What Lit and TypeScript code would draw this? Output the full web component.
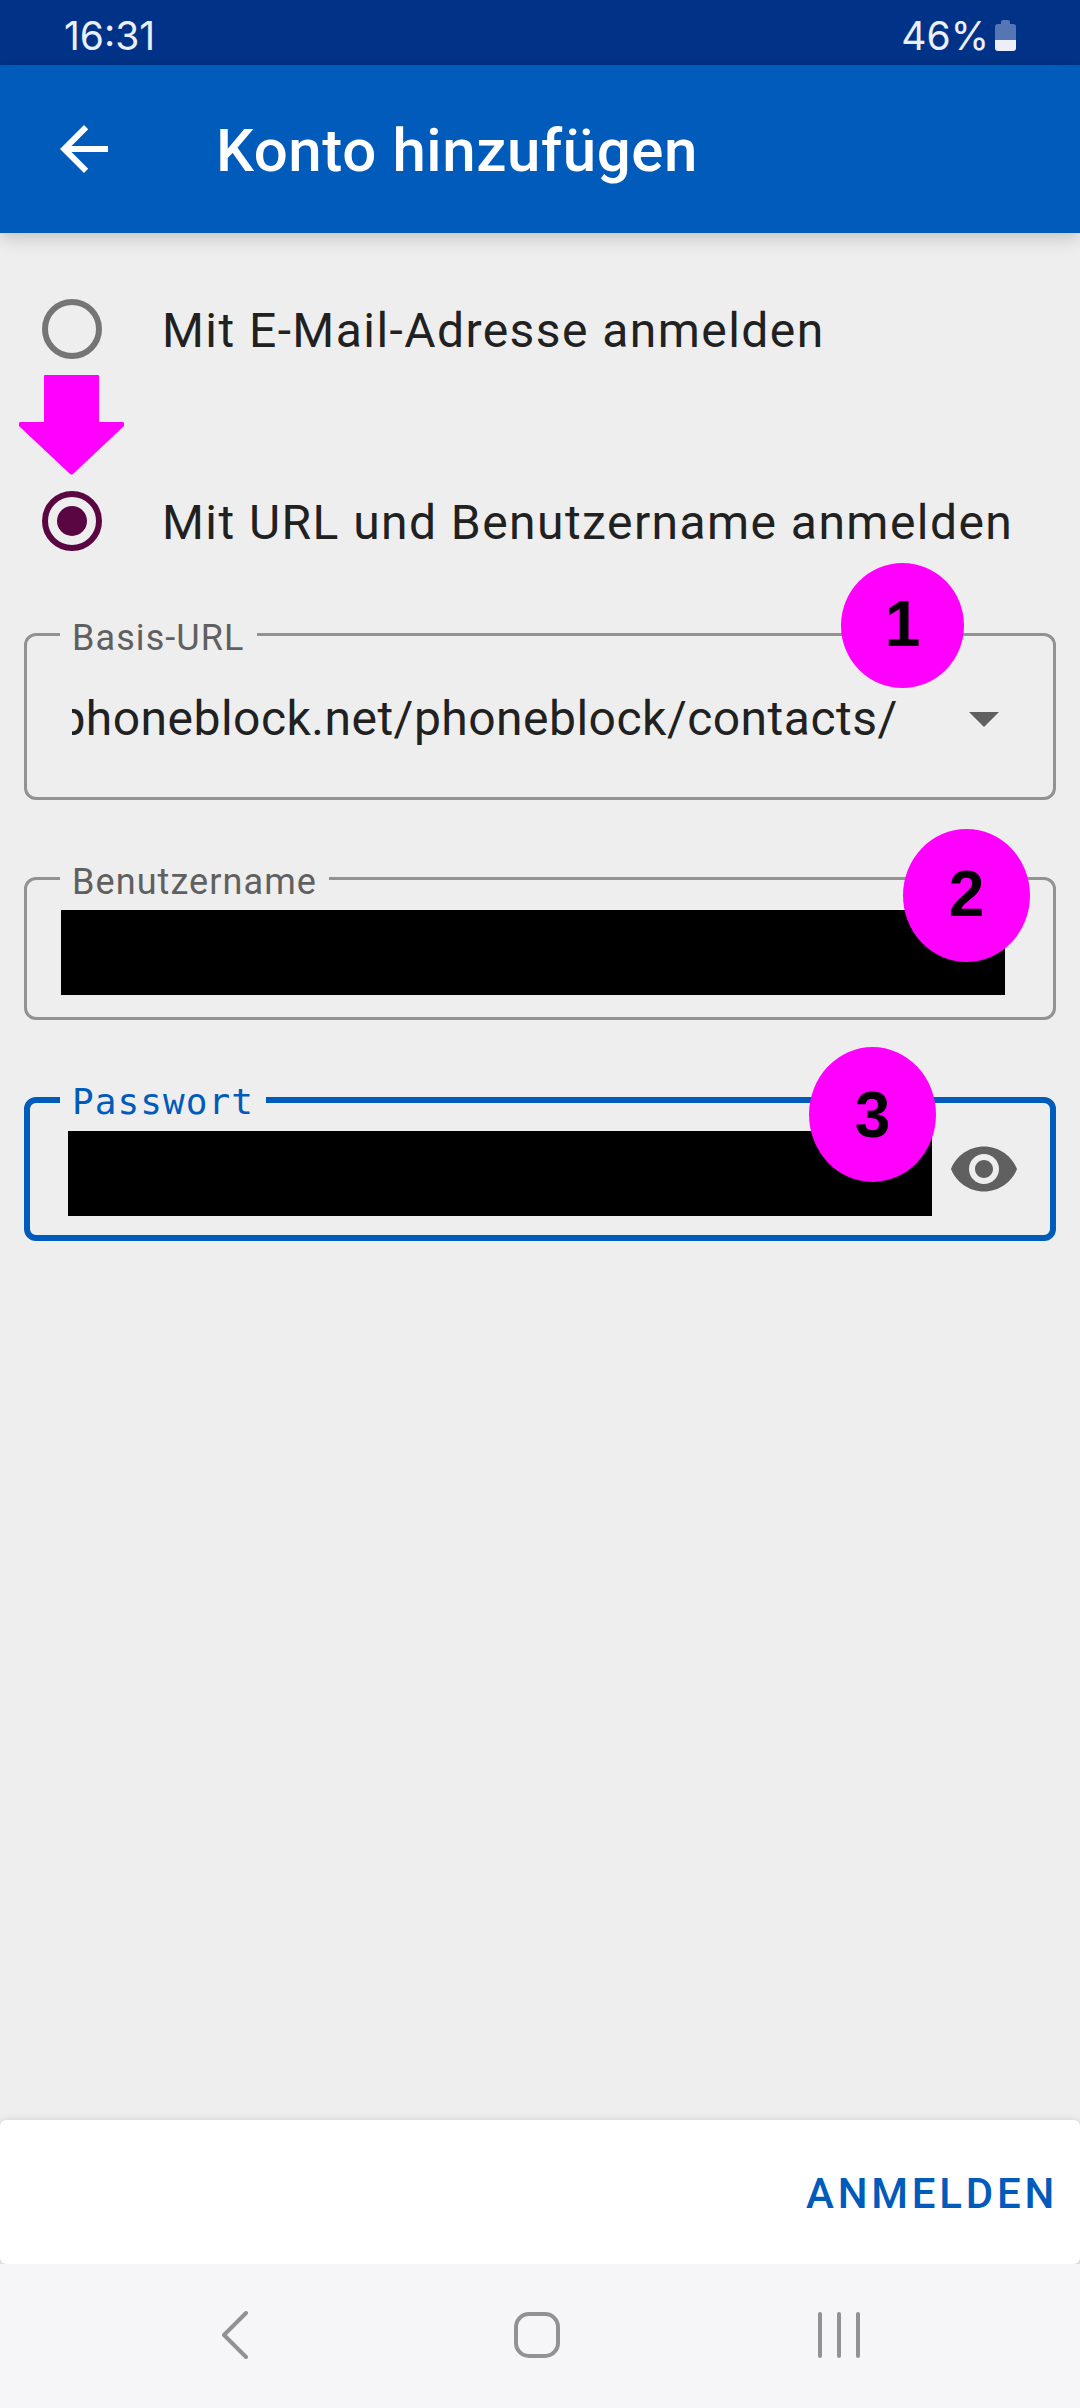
import { LitElement, html, css, svg } from "lit";
import { customElement, state, query } from "lit/decorators.js";

const backArrow = svg`<path d="M20 11H7.83l5.59-5.59L12 4l-8 8 8 8 1.41-1.41L7.83 13H20v-2z" />`;
const eye = svg`<path d="M12 4.5C7 4.5 2.73 7.61 1 12c1.73 4.39 6 7.5 11 7.5s9.27-3.11 11-7.5c-1.73-4.39-6-7.5-11-7.5zM12 17c-2.76 0-5-2.24-5-5s2.24-5 5-5 5 2.24 5 5-2.24 5-5 5zm0-8c-1.66 0-3 1.34-3 3s1.34 3 3 3 3-1.34 3-3-1.34-3-3-3z" />`;
const caret = svg`<path d="M7 10l5 5 5-5z" />`;

@customElement("app-root")
export class AppRoot extends LitElement {
  static styles = css`
    :host {
      display: flex;
      flex-direction: column;
      min-height: 100vh;
      background: #eeeeee;
      color: #212121;
      font-family: Roboto, "Liberation Sans", sans-serif;
      overflow: hidden;
    }
    * {
      box-sizing: border-box;
    }
    button {
      display: flex;
      align-items: center;
      justify-content: center;
      margin: 0;
      padding: 0;
      border: 0;
      background: none;
      color: inherit;
      font: inherit;
    }
    svg {
      display: block;
      fill: currentColor;
    }
    .status {
      display: flex;
      align-items: center;
      justify-content: space-between;
      height: 65px;
      padding: 6px 64px 0 64px;
      background: #003388;
      color: #eceff8;
      font-family: Inter, Roboto, sans-serif;
      font-size: 39px;
      line-height: 48px;
    }
    .battery {
      display: flex;
      align-items: center;
      gap: 6px;
    }
    .bar {
      display: flex;
      align-items: center;
      gap: 96px;
      height: 168px;
      padding: 0 48px;
      background: #005bbb;
      color: #ffffff;
      box-shadow: 0 4px 18px rgba(0, 0, 0, 0.2);
    }
    .title {
      margin: 0;
      padding-top: 4px;
      font-size: 60px;
      line-height: 72px;
      font-weight: 500;
      letter-spacing: 0.01em;
    }
    .form {
      flex: 1;
      display: flex;
      flex-direction: column;
      gap: 18px;
      padding: 24px;
    }
    .choices {
      display: flex;
      flex-direction: column;
      gap: 48px;
    }
    .choice {
      position: relative;
      display: flex;
      align-items: center;
      gap: 60px;
      height: 144px;
      padding: 0 18px;
      font-size: 48px;
      line-height: 56px;
      letter-spacing: 0.03em;
      white-space: nowrap;
    }
    .caption {
      padding-top: 4px;
    }
    .radio {
      appearance: none;
      display: grid;
      place-items: center;
      flex: none;
      width: 60px;
      height: 60px;
      margin: 0;
      border: 6px solid #757575;
      border-radius: 50%;
      outline: none;
    }
    .radio:checked {
      border-color: #590642;
    }
    .radio:checked::before {
      content: "";
      width: 30px;
      height: 30px;
      border-radius: 50%;
      background: #590642;
    }
    .pointer {
      position: absolute;
      left: -5px;
      bottom: 118px;
      color: #ff00ff;
    }
    .fields {
      display: flex;
      flex-direction: column;
      gap: 55px;
    }
    .field {
      position: relative;
    }
    .outline {
      min-width: 0;
      margin: 0;
      padding: 0 33px;
      border: 3px solid #929292;
      border-radius: 12px;
    }
    .legend {
      padding: 8px 12px 0;
      color: #606060;
      font-size: 36px;
      line-height: 39px;
      letter-spacing: 0.03em;
    }
    .focused {
      padding: 0 30px;
      border: 6px solid #005bbb;
    }
    .focused .legend {
      padding: 6px 12px 2px;
      color: #005bbb;
      font-family: "DejaVu Sans Mono", monospace;
      line-height: 42px;
    }
    .row {
      display: flex;
      align-items: center;
    }
    .row-url {
      height: 139px;
      padding: 0 0 20px 12px;
      gap: 50px;
    }
    .row-user {
      padding: 8px 15px 22px 1px;
    }
    .row-pass {
      align-items: flex-start;
      gap: 16px;
      padding: 6px 0 19px 8px;
    }
    .text {
      flex: 1;
      min-width: 0;
      height: 64px;
      margin: 0;
      padding: 2px 0 0;
      border: 0;
      border-radius: 0;
      outline: none;
      background: none;
      color: inherit;
      font: inherit;
      font-size: 48px;
      letter-spacing: 0.01em;
    }
    .covered {
      height: 85px;
      background: #000000;
      color: #000000;
    }
    .icon {
      flex: none;
      width: 72px;
      height: 76px;
      color: #606060;
    }
    .badge {
      position: absolute;
      display: flex;
      align-items: center;
      justify-content: center;
      width: 127px;
      height: 133px;
      padding-bottom: 4px;
      border-radius: 50%;
      background: #ff00ff;
      color: #000000;
      font-family: "Liberation Sans", Arial, sans-serif;
      font-size: 64px;
      font-weight: 700;
      line-height: 72px;
    }
    .badge-1 {
      top: -48px;
      right: 92px;
      width: 123px;
      height: 125px;
    }
    .badge-2 {
      top: -26px;
      right: 26px;
    }
    .badge-3 {
      top: -28px;
      right: 120px;
      height: 135px;
      padding-bottom: 0;
    }
    .actions {
      display: flex;
      align-items: center;
      justify-content: flex-end;
      height: 144px;
      padding: 0 22px;
      border-radius: 6px;
      background: #ffffff;
      box-shadow: 0 2px 10px rgba(0, 0, 0, 0.2);
    }
    .submit {
      height: 108px;
      padding-top: 4px;
      color: #005bbb;
      font-size: 42px;
      font-weight: 500;
      line-height: 48px;
      letter-spacing: 0.09em;
    }
    .nav {
      position: relative;
      display: grid;
      grid-template-columns: repeat(3, 1fr);
      height: 144px;
      padding: 0 90px 2px 84px;
      background: #f6f6f8;
      color: #929292;
    }
    .stroke {
      fill: none;
      stroke: currentColor;
      stroke-width: 4;
      stroke-linecap: round;
      stroke-linejoin: round;
    }
  `;

  @state() private mode = "url";
  @state() private revealed = false;
  @query("#base-url") private baseUrl!: HTMLInputElement;

  // Long addresses show their end, the part that differs between servers.
  protected firstUpdated() {
    this.baseUrl.scrollLeft = this.baseUrl.scrollWidth;
  }

  render() {
    return html`
      <div class="status">
        <span>16:31</span>
        <span class="battery">
          <span>46%</span>
          <svg width="21" height="32" viewBox="0 0 21 32" aria-hidden="true">
            <path fill="#5576b2" d="M6 2q0-2 2-2h5q2 0 2 2v2h3q3 0 3 3v13H0V7q0-3 3-3h3z" />
            <path d="M0 20h21v8q0 3-3 3H3q-3 0-3-3z" />
          </svg>
        </span>
      </div>
      <header class="bar">
        <button type="button" aria-label="Zurück">
          <svg width="72" height="72" viewBox="0 0 24 24">${backArrow}</svg>
        </button>
        <h1 class="title">Konto hinzufügen</h1>
      </header>
      <main class="form">
        <div class="choices" role="radiogroup">
          <label class="choice">
            <input class="radio" type="radio" name="mode" value="mail"
              .checked=${this.mode === "mail"} @change=${() => (this.mode = "mail")} />
            <span class="caption">Mit E-Mail-Adresse anmelden</span>
          </label>
          <label class="choice">
            <input class="radio" type="radio" name="mode" value="url"
              .checked=${this.mode === "url"} @change=${() => (this.mode = "url")} />
            <span class="caption">Mit URL und Benutzername anmelden</span>
            <svg class="pointer" width="105" height="100" viewBox="0 0 105 100" aria-hidden="true">
              <path d="M26 0h53q1 0 1 1v46h24q1 0 1 2v2L54 99q-1.500 1-3 0L0 51v-2q0-2 1-2h24V1q0-1 1-1z" />
            </svg>
          </label>
        </div>
        <div class="fields">
          <div class="field">
            <fieldset class="outline">
              <legend class="legend"><label for="base-url">Basis-URL</label></legend>
              <div class="row row-url">
                <input class="text" id="base-url" type="text"
                  value="https://phoneblock.net/phoneblock/contacts/" />
                <button class="icon" type="button" aria-label="Auswahl öffnen">
                  <svg width="72" height="72" viewBox="0 0 24 24">${caret}</svg>
                </button>
              </div>
            </fieldset>
            <span class="badge badge-1">1</span>
          </div>
          <div class="field">
            <fieldset class="outline">
              <legend class="legend"><label for="user">Benutzername</label></legend>
              <div class="row row-user">
                <input class="text covered" id="user" type="text" />
              </div>
            </fieldset>
            <span class="badge badge-2">2</span>
          </div>
          <div class="field">
            <fieldset class="outline focused">
              <legend class="legend"><label for="password">Passwort</label></legend>
              <div class="row row-pass">
                <input class="text covered" id="password" type=${this.revealed ? "text" : "password"} />
                <button class="icon" type="button" aria-label="Passwort anzeigen"
                  @click=${() => (this.revealed = !this.revealed)}>
                  <svg width="72" height="72" viewBox="0 0 24 24">${eye}</svg>
                </button>
              </div>
            </fieldset>
            <span class="badge badge-3">3</span>
          </div>
        </div>
      </main>
      <div class="actions">
        <button class="submit" type="submit">ANMELDEN</button>
      </div>
      <nav class="nav">
        <button type="button" aria-label="Zurück">
          <svg class="stroke" width="48" height="48" viewBox="0 0 48 48"><path d="M35 2 13 24l22 22" /></svg>
        </button>
        <button type="button" aria-label="Startseite">
          <svg class="stroke" width="48" height="48" viewBox="0 0 48 48"><rect x="3" y="3" width="42" height="42" rx="13" /></svg>
        </button>
        <button type="button" aria-label="Letzte Apps">
          <svg class="stroke" width="48" height="48" viewBox="0 0 48 48"><path d="M5 3v42M24 3v42M43 3v42" /></svg>
        </button>
      </nav>
    `;
  }
}
